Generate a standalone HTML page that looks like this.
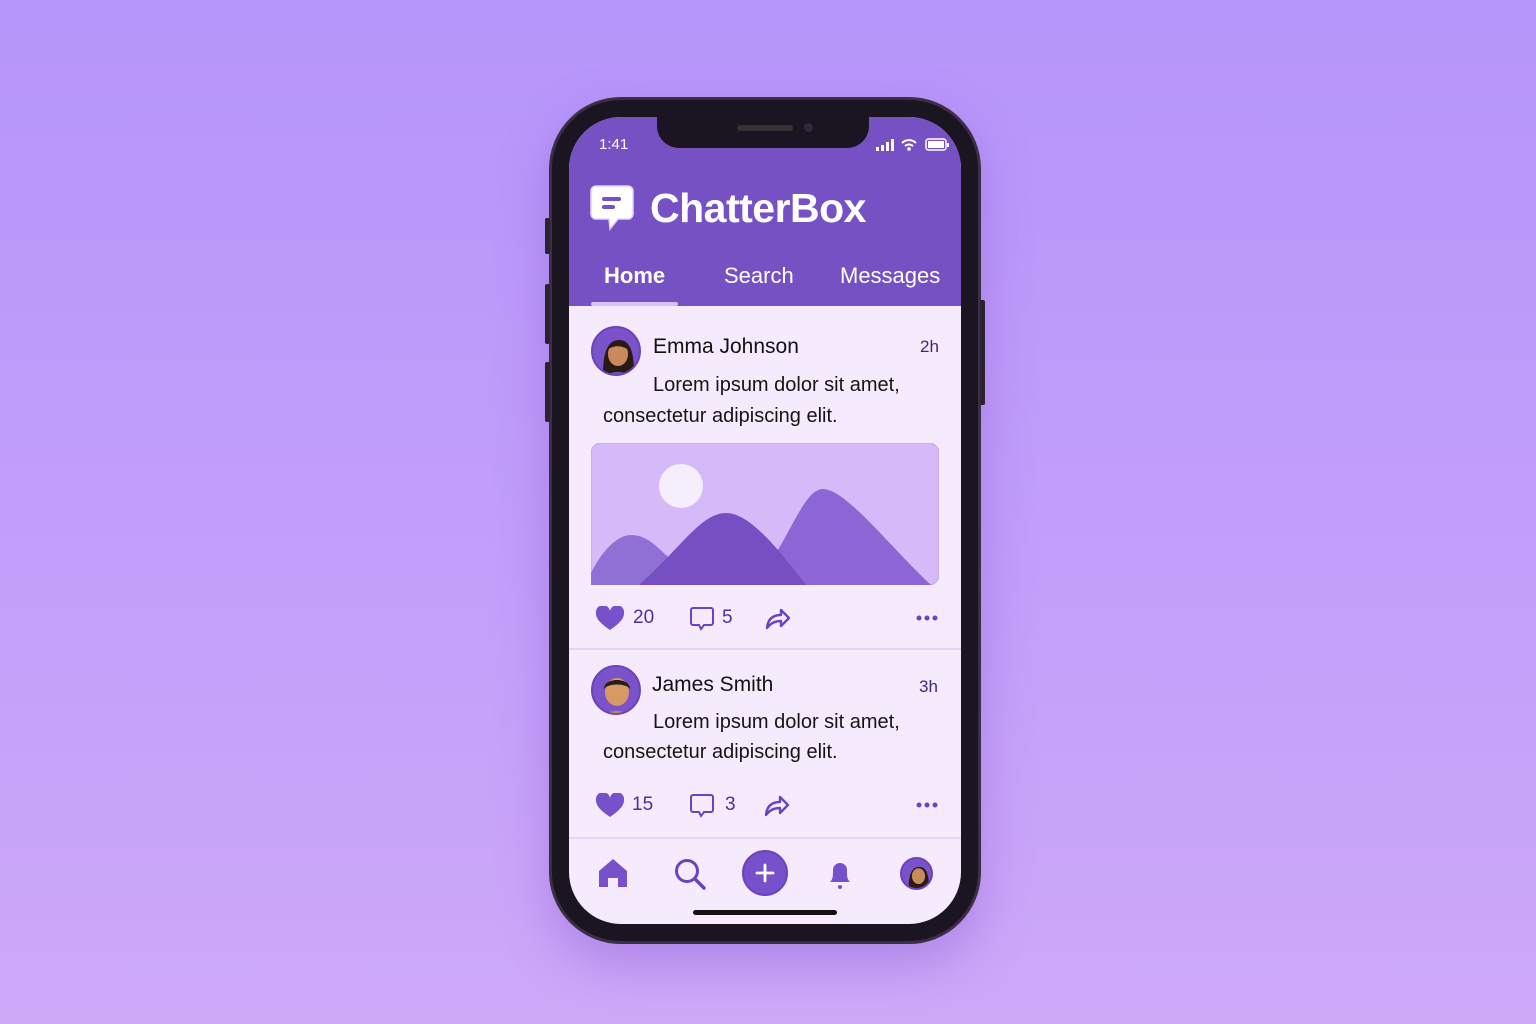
<!DOCTYPE html>
<html><head><meta charset="utf-8"><style>
*{margin:0;padding:0;box-sizing:border-box}
body{width:1536px;height:1024px;overflow:hidden;background:linear-gradient(180deg,#b695fa 0%,#c3a0fa 60%,#cea9f8 100%);font-family:"Liberation Sans",sans-serif;position:relative}
.abs{position:absolute}
.phone{left:549px;top:97px;width:432px;height:847px;border-radius:72px;background:#1a1520;box-shadow:0 20px 50px rgba(120,70,200,.35);border:3px solid #3a2f45}
.screen{left:569px;top:117px;width:392px;height:807px;border-radius:52px;background:#f6ebfc;overflow:hidden}
.hdr{left:0;top:0;width:392px;height:189px;background:#7651c3}
.notch{left:88px;top:-2px;width:212px;height:33px;background:#1a1520;border-radius:0 0 22px 22px}
.w{color:#fff}
.name{font-size:21px;color:#111;}
.body{font-size:20px;color:#151515;line-height:31px}
.time{font-size:17px;color:#3a2a7a}
.cnt{font-size:19px;color:#4a2fa0}
.av{width:50px;height:50px;border-radius:50%;background:#7a52c9;border:2px solid #6a44b8;overflow:hidden}
</style></head><body>
<div class="abs phone"></div>
<div class="abs" style="left:545px;top:218px;width:5px;height:36px;background:#2a2230;border-radius:2px"></div>
<div class="abs" style="left:545px;top:284px;width:5px;height:60px;background:#2a2230;border-radius:2px"></div>
<div class="abs" style="left:545px;top:362px;width:5px;height:60px;background:#2a2230;border-radius:2px"></div>
<div class="abs" style="left:980px;top:300px;width:5px;height:105px;background:#2a2230;border-radius:2px"></div>
<div class="abs screen">
 <div class="abs hdr"></div>
 <div class="abs notch"></div>
 <div class="abs" style="left:168px;top:8px;width:56px;height:6px;border-radius:3px;background:#333"></div>
 <div class="abs" style="left:235px;top:6px;width:9px;height:9px;border-radius:50%;background:#2a2a40"></div>
 <div class="abs w" style="left:30px;top:19px;font-size:15px">1:41</div>
 <svg class="abs" style="left:305px;top:20px" width="80" height="16" viewBox="0 0 80 16">
  <rect x="2" y="10" width="3" height="4" fill="#fff"/><rect x="7" y="8" width="3" height="6" fill="#fff"/><rect x="12" y="5" width="3" height="9" fill="#fff"/><rect x="17" y="2" width="3" height="12" fill="#fff"/>
  <path d="M28 6a10 10 0 0 1 14 0M31 9a6 6 0 0 1 8 0" stroke="#fff" stroke-width="2" fill="none"/><circle cx="35" cy="12" r="1.8" fill="#fff"/>
  <rect x="52" y="2" width="20" height="11" rx="2.5" stroke="#fff" stroke-width="1.5" fill="none"/><rect x="54" y="4" width="16" height="7" fill="#fff"/><rect x="73" y="6" width="2" height="4" fill="#fff"/>
 </svg>
 <svg class="abs" style="left:21px;top:68px" width="44" height="46" viewBox="0 0 44 46">
  <path d="M6 1h32a5 5 0 0 1 5 5v23a5 5 0 0 1-5 5H28l-8 10 -1-10H6a5 5 0 0 1-5-5V6a5 5 0 0 1 5-5z" fill="#fff" stroke="#e0d4f6" stroke-width="1.5"/>
  <rect x="12" y="12" width="19" height="4" rx="2" fill="#7651c3"/><rect x="12" y="20" width="13" height="4" rx="2" fill="#7651c3"/>
 </svg>
 <div class="abs w" style="left:81px;top:68px;font-size:41px;font-weight:bold;letter-spacing:-0.5px">ChatterBox</div>
 <div class="abs w" style="left:35px;top:146px;font-size:22px;font-weight:bold">Home</div>
 <div class="abs w" style="left:155px;top:146px;font-size:22px">Search</div>
 <div class="abs w" style="left:271px;top:146px;font-size:22px">Messages</div>
 <div class="abs" style="left:22px;top:185px;width:87px;height:4px;background:#d6c2f6;border-radius:2px"></div>

 <!-- post 1 -->
 <div class="abs av" style="left:22px;top:209px">
  <svg width="50" height="50" viewBox="0 0 50 50"><path d="M10 46c0-20 4-34 16-34s15 14 15 34z" fill="#2a1a14"/><ellipse cx="25" cy="26" rx="10" ry="12" fill="#c98a5c"/><path d="M14 22c2-10 20-12 22 0-6-4-14-6-22 0z" fill="#2a1a14"/><path d="M12 50c2-8 24-8 26 0z" fill="#7a52c9"/></svg>
 </div>
 <div class="abs name" style="left:84px;top:218px">Emma Johnson</div>
 <div class="abs time" style="left:351px;top:220px">2h</div>
 <div class="abs body" style="left:84px;top:253px">Lorem ipsum dolor sit amet,</div>
 <div class="abs body" style="left:34px;top:284px">consectetur adipiscing elit.</div>
 <svg class="abs" style="left:22px;top:326px" width="348" height="142" viewBox="0 0 348 142">
  <rect x="0" y="0" width="348" height="142" rx="10" fill="#d5b9f8" stroke="#c4a4f4"/>
  <circle cx="90" cy="43" r="22" fill="#f5eefc"/>
  <path d="M0 142 L0 130 C10 110 25 92 40 92 C60 92 70 110 90 125 L100 142z" fill="#9170d6"/>
  <path d="M160 142 C195 110 210 46 232 46 C255 46 300 105 340 142z" fill="#8c66d4"/>
  <path d="M48 142 C90 105 110 70 135 70 C160 70 190 110 215 142z" fill="#7650c3"/>
 </svg>
 <svg class="abs" style="left:26px;top:489px" width="30" height="26" viewBox="0 0 30 26"><path d="M15 24C3 16 1 11 1 7.5A6.5 6.5 0 0 1 15 5a6.5 6.5 0 0 1 14 2.5C29 11 27 16 15 24z" fill="#7651c9"/></svg>
 <div class="abs cnt" style="left:64px;top:490px">20</div>
 <svg class="abs" style="left:120px;top:489px" width="26" height="26" viewBox="0 0 26 26"><path d="M4 2h18a2 2 0 0 1 2 2v13a2 2 0 0 1-2 2H15l-3 4-2-4H4a2 2 0 0 1-2-2V4a2 2 0 0 1 2-2z" fill="none" stroke="#6a44c0" stroke-width="2"/></svg>
 <div class="abs cnt" style="left:153px;top:490px">5</div>
 <svg class="abs" style="left:195px;top:489px" width="28" height="26" viewBox="0 0 28 26"><path d="M3 22C4 12 10 9 17 9V4l8 8-8 8v-5c-6 0-10 2-14 7z" fill="none" stroke="#6a44c0" stroke-width="2.4" stroke-linejoin="round"/></svg>
 <svg class="abs" style="left:346px;top:497px" width="24" height="8"><circle cx="4" cy="4" r="2.5" fill="#6a44c0"/><circle cx="12" cy="4" r="2.5" fill="#6a44c0"/><circle cx="20" cy="4" r="2.5" fill="#6a44c0"/></svg>
 <div class="abs" style="left:0;top:531px;width:392px;height:2px;background:#e4d2f8"></div>

 <!-- post 2 -->
 <div class="abs av" style="left:22px;top:548px">
  <svg width="50" height="50" viewBox="0 0 50 50"><ellipse cx="24" cy="25" rx="12" ry="14" fill="#d69a62"/><path d="M11 22c0-12 26-12 26 0-4-6-22-6-26 0z" fill="#2a1a14"/><path d="M10 50c2-8 26-8 28 0z" fill="#c88a58"/></svg>
 </div>
 <div class="abs name" style="left:83px;top:556px">James Smith</div>
 <div class="abs time" style="left:350px;top:560px">3h</div>
 <div class="abs body" style="left:84px;top:590px">Lorem ipsum dolor sit amet,</div>
 <div class="abs body" style="left:34px;top:620px">consectetur adipiscing elit.</div>
 <svg class="abs" style="left:26px;top:676px" width="30" height="26" viewBox="0 0 30 26"><path d="M15 24C3 16 1 11 1 7.5A6.5 6.5 0 0 1 15 5a6.5 6.5 0 0 1 14 2.5C29 11 27 16 15 24z" fill="#7651c9"/></svg>
 <div class="abs cnt" style="left:63px;top:677px">15</div>
 <svg class="abs" style="left:120px;top:676px" width="26" height="26" viewBox="0 0 26 26"><path d="M4 2h18a2 2 0 0 1 2 2v13a2 2 0 0 1-2 2H15l-3 4-2-4H4a2 2 0 0 1-2-2V4a2 2 0 0 1 2-2z" fill="none" stroke="#6a44c0" stroke-width="2"/></svg>
 <div class="abs cnt" style="left:156px;top:677px">3</div>
 <svg class="abs" style="left:194px;top:676px" width="28" height="26" viewBox="0 0 28 26"><path d="M3 22C4 12 10 9 17 9V4l8 8-8 8v-5c-6 0-10 2-14 7z" fill="none" stroke="#6a44c0" stroke-width="2.4" stroke-linejoin="round"/></svg>
 <svg class="abs" style="left:346px;top:684px" width="24" height="8"><circle cx="4" cy="4" r="2.5" fill="#6a44c0"/><circle cx="12" cy="4" r="2.5" fill="#6a44c0"/><circle cx="20" cy="4" r="2.5" fill="#6a44c0"/></svg>
 <div class="abs" style="left:0;top:720px;width:392px;height:2px;background:#e4d2f8"></div>

 <!-- bottom nav -->
 <svg class="abs" style="left:28px;top:740px" width="32" height="32" viewBox="0 0 32 32"><path d="M2 14L16 2l14 12v16h-9v-9h-10v9H2z" fill="#7651c9"/></svg>
 <svg class="abs" style="left:104px;top:740px" width="34" height="34" viewBox="0 0 34 34"><circle cx="14" cy="14" r="10.5" fill="none" stroke="#6a44c0" stroke-width="3"/><path d="M22 22l9 9" stroke="#6a44c0" stroke-width="3.5" stroke-linecap="round"/></svg>
 <div class="abs" style="left:173px;top:733px;width:46px;height:46px;border-radius:50%;background:#7651c9;border:2px solid #6a44c0"></div>
 <svg class="abs" style="left:184px;top:744px" width="24" height="24"><path d="M12 4v16M4 12h16" stroke="#fff" stroke-width="2.8" stroke-linecap="round"/></svg>
 <svg class="abs" style="left:256px;top:740px" width="30" height="34" viewBox="0 0 30 34"><path d="M5 25c3-3 3-6 3-12a7 7 0 0 1 14 0c0 6 0 9 3 12z" fill="#7651c9"/><circle cx="15" cy="30" r="2" fill="#7651c9"/></svg>
 <div class="abs av" style="left:331px;top:740px;width:33px;height:33px">
  <svg width="33" height="33" viewBox="0 0 50 50"><path d="M10 46c0-20 4-34 16-34s15 14 15 34z" fill="#2a1a14"/><ellipse cx="25" cy="26" rx="10" ry="12" fill="#c98a5c"/><path d="M12 50c2-8 24-8 26 0z" fill="#7a52c9"/></svg>
 </div>
 <div class="abs" style="left:124px;top:793px;width:144px;height:5px;border-radius:3px;background:#111"></div>
</div>
</body></html>
